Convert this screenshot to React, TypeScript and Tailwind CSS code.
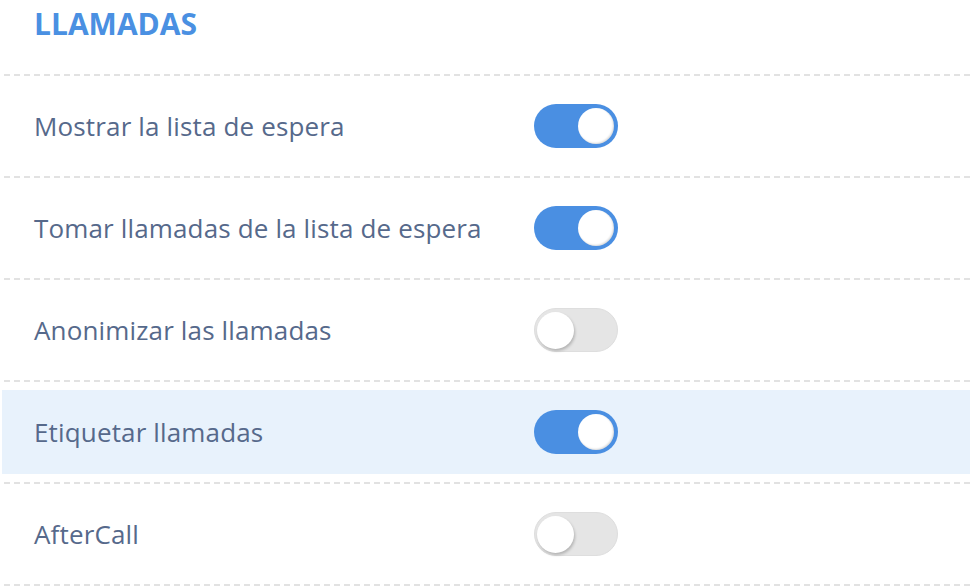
const rows = [
  { label: "Mostrar la lista de espera", on: true },
  { label: "Tomar llamadas de la lista de espera", on: true },
  { label: "Anonimizar las llamadas", on: false },
  { label: "Etiquetar llamadas", on: true, active: true },
  { label: "AfterCall", on: false },
];

function Divider() {
  return (
    <div className="h-[2px] w-full bg-[linear-gradient(to_right,#e2e2e2_6px,transparent_6px)] bg-[length:10px_2px] bg-[position:4px_0] bg-repeat-x" />
  );
}

function Toggle({ on }: { on: boolean }) {
  if (on) {
    return (
      <div className="flex h-[44px] w-[84px] items-center justify-end rounded-full bg-[#4a8fe2] pr-[4px]">
        <div className="h-[36px] w-[36px] rounded-full bg-white shadow-[inset_-1px_-1px_2px_rgba(0,0,0,0.15)]" />
      </div>
    );
  }
  return (
    <div className="flex h-[44px] w-[84px] items-center rounded-full border border-[#dedede] bg-[#e5e5e5] pl-[2px]">
      <div className="h-[37px] w-[37px] rounded-full bg-white shadow-[1px_2px_3px_rgba(0,0,0,0.22)]" />
    </div>
  );
}

export default function App() {
  return (
    <div className="w-[970px] bg-white font-['Open_Sans',sans-serif]">
      <div className="h-[74px] pl-[34px] pt-[3px]">
        <h2 className="text-[30px] font-bold leading-[41px] text-[#4a90e2]">LLAMADAS</h2>
      </div>
      <Divider />
      {rows.map((row, i) => (
        <div key={i}>
          <div className="h-[100px] py-[8px] pl-[2px]">
            <div
              className={`flex h-[84px] items-center pl-[32px] ${row.active ? "bg-[#e8f2fc]" : ""}`}
            >
              <span className="w-[500px] text-[26px] tracking-[0.15px] text-[#56698b]">{row.label}</span>
              <Toggle on={row.on} />
            </div>
          </div>
          <Divider />
        </div>
      ))}
    </div>
  );
}
